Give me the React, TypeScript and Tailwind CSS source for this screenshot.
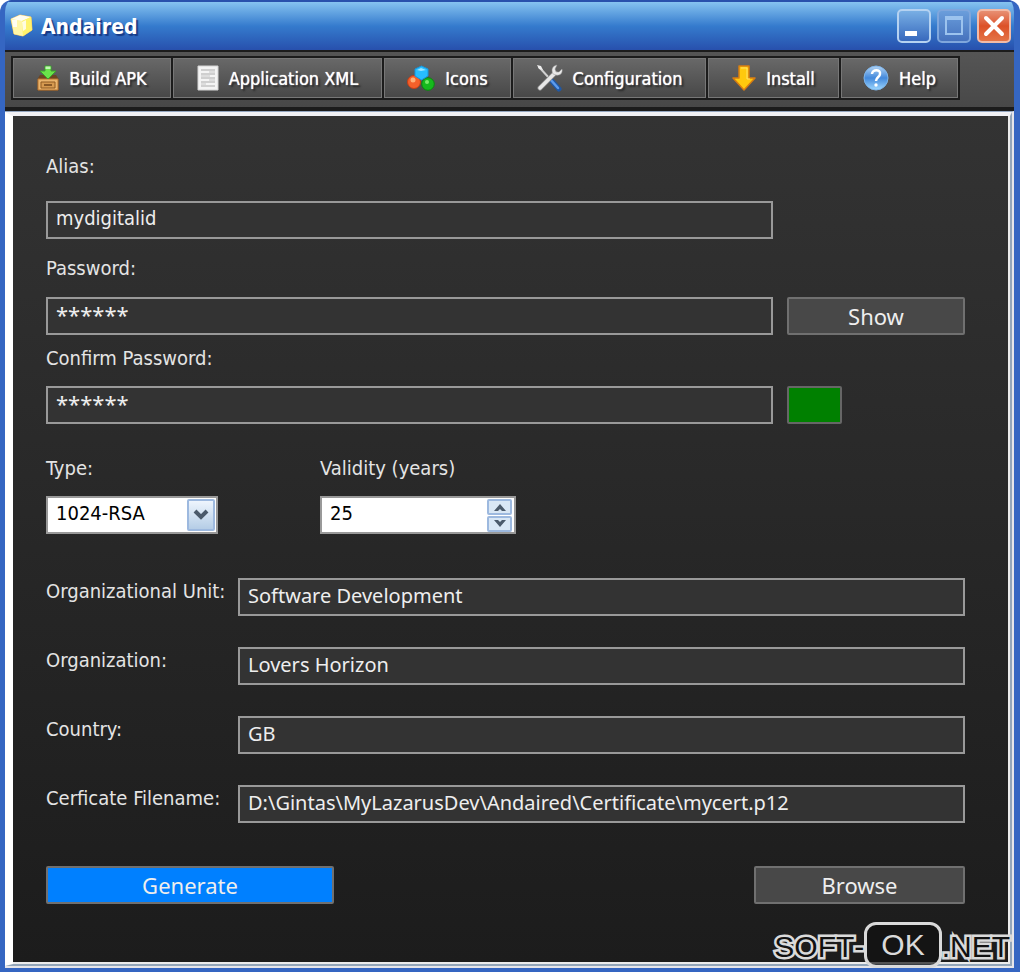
import { useState } from 'react';
import type { ReactNode } from 'react';

const AppIcon = () => (
  <svg viewBox="0 0 24 24" className="size-6" aria-hidden="true">
    <path d="M2 5 11 1 22 3 23 16 14 22 5 20Z" fill="#fff27a" stroke="#f3c564" strokeWidth="1" strokeLinejoin="round" />
    <path d="M2 5 13 7 14 22 5 20Z" fill="#fff7a8" />
    <path d="M2 5 11 1 22 3 13 7Z" fill="#fffdf0" />
    <path d="M3 6 8 6 8 13 4 13Z" fill="#fffef2" />
    <path d="M13 7 22 3 23 16 14 22Z" fill="#fff36c" />
    <path d="M13 8 17 6 17 15 14 17Z" fill="#fffce0" />
  </svg>
);

const BuildIcon = () => (
  <svg viewBox="0 0 22 26" className="h-[26px] w-[22px]" aria-hidden="true">
    <path d="M3 10H19L21.500 14V25.500H.5V14Z" fill="#6b4522" />
    <path d="M1 14H21V25H1Z" fill="#eab46c" stroke="#b87632" />
    <path d="M4 17H18V23H4Z" fill="#d69a50" stroke="#8f5a22" />
    <path d="M7 20H15" stroke="#6f431a" strokeWidth="1.500" />
    <path d="M8 1H14V6H19L11 14 3 6H8Z" fill="#6ae24a" stroke="#3ba32c" />
    <path d="M8.500 1.500H13.500V4H8.500Z" fill="#c3f7b6" />
  </svg>
);

const DocumentIcon = () => (
  <svg viewBox="0 0 22 26" className="h-[26px] w-[22px]" aria-hidden="true">
    <path d="M1 1H21V25H1Z" fill="#f4f4f4" stroke="#d4d4d4" />
    <path d="M4 5H18M4 9H18M4 13H18M4 17H18M4 21H18" stroke="#a9a9a9" strokeWidth="1.200" />
    <path d="M12 7H18M4 11H13M12 15H18M4 19H9" stroke="#c6c6c6" />
  </svg>
);

const BallsIcon = () => (
  <svg viewBox="0 0 28 26" className="h-[26px] w-7" aria-hidden="true">
    <circle cx="7" cy="17" r="6.500" fill="#f4602a" stroke="#c63d15" />
    <circle cx="21" cy="19" r="6.300" fill="#16b91d" stroke="#0b860f" />
    <path d="M8 4 14.500 1 21 4V11L14.500 15 8 11Z" fill="#27bdff" stroke="#1795dc" strokeLinejoin="round" />
    <circle cx="6" cy="15" r="2.500" fill="#ffaf78" />
    <circle cx="20" cy="17" r="2" fill="#79ea68" />
    <path d="M10 5 14 3 19 5 14 6Z" fill="#9be6ff" />
  </svg>
);

const ToolsIcon = () => (
  <svg viewBox="0 0 26 28" className="h-7 w-[26px]" aria-hidden="true">
    <path d="M2 3 13 15" stroke="#cfcfcf" strokeWidth="2" strokeLinecap="round" />
    <path d="M0 1 4 2 6 6 2 5Z" fill="#eee" />
    <path d="M13 15 22 25" stroke="#1f58a5" strokeWidth="5" strokeLinecap="round" />
    <path d="M13 15 21 24" stroke="#5d9bec" strokeWidth="2.500" strokeLinecap="round" />
    <path d="M3 24 18 9" stroke="#8c8c8c" strokeWidth="5" strokeLinecap="round" />
    <path d="M3 24 18 9" stroke="#e8e8e8" strokeWidth="3.500" strokeLinecap="round" />
    <path d="M20 1 18 5 19 8 22 8 25 5C26 9 23 12 19 11L16 10C14 6 15 2 20 1Z" fill="#e9e9e9" stroke="#999" strokeWidth=".500" />
  </svg>
);

const InstallIcon = () => (
  <svg viewBox="0 0 24 26" className="h-[26px] w-6" aria-hidden="true">
    <path d="M7 1H17V13H23L12 25 1 13H7Z" fill="#ffc90e" stroke="#d87d12" strokeWidth="1.500" strokeLinejoin="round" />
    <path d="M9 3H15V14H18" fill="none" stroke="#ffe26a" />
  </svg>
);

const HelpIcon = () => (
  <svg viewBox="0 0 26 26" className="size-[26px]" aria-hidden="true">
    <defs>
      <linearGradient id="globe" x1="0" y1="0" x2="0" y2="1">
        <stop offset="0" stopColor="#b4d5f4" />
        <stop offset=".500" stopColor="#4389dc" />
        <stop offset="1" stopColor="#9ed8ff" />
      </linearGradient>
    </defs>
    <circle cx="13" cy="13" r="12" fill="url(#globe)" stroke="#7eb5ea" />
    <path d="M9 9C9 4 18 4 17 9C17 12 13 12 13 16" fill="none" stroke="#fff" strokeWidth="2.500" />
    <circle cx="13" cy="20" r="1.700" fill="#fff" />
  </svg>
);

type ToolButtonProps = { icon: ReactNode; label: string; className: string };

const ToolButton = ({ icon, label, className }: ToolButtonProps) => (
  <button
    type="button"
    className={`flex h-10 items-center justify-center gap-[10px] border border-[#777] bg-linear-to-b from-[#686868] to-[#484848] text-[18px] text-white outline-2 outline-[#1c1c1c] [text-shadow:0_0_1px_#fff,2px_2px_2px_#222] ${className}`}
  >
    {icon}
    {label}
  </button>
);

const captionButton = 'flex size-[34px] items-center justify-center rounded-[5px] border-2';
const fieldBox = 'h-[38px] border-2 border-[#999] bg-[#333] px-2 text-[#eee] outline-none';
const pushButton = "h-[38px] rounded-xs border-2 border-[#707070] font-['Noto_Sans',sans-serif] text-[22px] leading-6 text-[#eee]";

type DetailRowProps = { id: string; label: string; value: string };

const DetailRow = ({ id, label, value }: DetailRowProps) => (
  <div className="flex">
    <label htmlFor={id} className="w-48 shrink-0 leading-[26px] whitespace-nowrap">
      {label}
    </label>
    <input
      id={id}
      defaultValue={value}
      className={`min-w-0 flex-1 pb-1 font-['Noto_Sans',sans-serif] text-[20px] ${fieldBox}`}
    />
  </div>
);

export default function App() {
  const [visible, setVisible] = useState(false);
  const [years, setYears] = useState(25);
  const password = 'secret';
  const shown = visible ? password : '*'.repeat(password.length);

  return (
    <div className="relative flex min-h-screen flex-col overflow-hidden rounded-t-xl border-r-[6px] border-b-4 border-l-[5px] border-[#3566c2] bg-[#3566c2] font-['DejaVu_Sans_Condensed','DejaVu_Sans',sans-serif]">
      <header className="flex h-[50px] items-center gap-2 border-t-2 border-[#2951ac] bg-linear-to-b from-[#86c3f0] via-[#357bcd] to-[#2850ad] pr-[3px] pl-1">
        <AppIcon />
        <h1 className="flex-1 pt-1 text-[21px] font-bold text-white [text-shadow:2px_2px_1px_#173a86]">
          Andaired
        </h1>
        <div className="flex gap-[6px]">
          <button type="button" aria-label="Minimize" className={`${captionButton} border-[#b5d2f1] bg-linear-to-b from-[#79afe4] to-[#3869bd]`}>
            <svg viewBox="0 0 24 24" className="size-6"><path d="M3 17H15V22H3Z" fill="#fff" /></svg>
          </button>
          <button type="button" aria-label="Maximize" className={`${captionButton} border-[#7fa6dc] bg-linear-to-b from-[#6b9edb] to-[#4672bd]`}>
            <svg viewBox="0 0 24 24" className="size-6">
              <path d="M4 4H20V20H4Z" fill="none" stroke="#9cc3ee" strokeWidth="2" />
              <path d="M3 4H21" stroke="#9cc3ee" strokeWidth="4" />
            </svg>
          </button>
          <button type="button" aria-label="Close" className={`${captionButton} border-[#f3bba7] bg-linear-to-b from-[#e78f72] via-[#dc5127] to-[#e47346]`}>
            <svg viewBox="0 0 24 24" className="size-6"><path d="M4 4 20 20M20 4 4 20" stroke="#fff" strokeWidth="4" strokeLinecap="round" /></svg>
          </button>
        </div>
      </header>

      <nav className="flex h-[61px] gap-[2px] border-t-2 border-b-4 border-[#1c1c1c] bg-linear-to-b from-[#555] to-[#484848] px-2 pt-[6px]">
        <ToolButton icon={<BuildIcon />} label="Build APK" className="w-[158px]" />
        <ToolButton icon={<DocumentIcon />} label="Application XML" className="w-[209px]" />
        <ToolButton icon={<BallsIcon />} label="Icons" className="w-[127px]" />
        <ToolButton icon={<ToolsIcon />} label="Configuration" className="w-[193px]" />
        <ToolButton icon={<InstallIcon />} label="Install" className="w-[131px]" />
        <ToolButton icon={<HelpIcon />} label="Help" className="w-[117px]" />
      </nav>

      <main className="flex flex-1 flex-col border-t border-r-2 border-b-2 border-[#93a6c0] border-r-[#e6e6ea] border-b-[#e6e6ea] bg-white">
        <div className="flex flex-1 flex-col border-t-4 border-r-2 border-b-2 border-l-8 border-t-[#f1f1f5] border-r-[#93a6ba] border-b-[#93a6ba] border-l-white">
          <form
            className="flex-1 border-r-2 border-b-2 border-[#ececec] bg-linear-to-b from-[#333] to-[#1c1c1c] pt-[38px] pr-[43px] pb-10 pl-[33px] text-[20px] leading-6 text-[#e4e4e4]"
            onSubmit={(e) => e.preventDefault()}
          >
            <label htmlFor="alias" className="block">Alias:</label>
            <div className="mt-[23px] pr-48">
              <input id="alias" defaultValue="mydigitalid" className={`w-full pb-1 text-[20px] ${fieldBox}`} />
            </div>

            <label htmlFor="password" className="mt-[17px] block">Password:</label>
            <div className="mt-[17px] flex gap-[14px]">
              <input
                id="password"
                value={shown}
                readOnly
                className={`min-w-0 flex-1 pb-1 font-['Noto_Sans',sans-serif] text-[22px] ${fieldBox}`}
              />
              <button type="button" className={`w-[178px] bg-[#484848] ${pushButton}`} onClick={() => setVisible(!visible)}>
                Show
              </button>
            </div>

            <label htmlFor="confirm" className="mt-[11px] block">Confirm Password:</label>
            <div className="mt-4 flex gap-[14px]">
              <input
                id="confirm"
                value={shown}
                readOnly
                className={`min-w-0 flex-1 pb-1 font-['Noto_Sans',sans-serif] text-[22px] ${fieldBox}`}
              />
              <div className="w-[178px]">
                <div className="h-[38px] w-[55px] rounded-xs border-2 border-[#666] bg-[#008000]" />
              </div>
            </div>

            <div className="mt-8 flex">
              <div className="w-[274px]">
                <label htmlFor="type" className="block">Type:</label>
                <div className="relative mt-4 w-[172px]">
                  <select id="type" className="h-[38px] w-full appearance-none border-2 border-[#999] bg-white pb-1 pl-2 text-[20px] text-black">
                    <option>1024-RSA</option>
                    <option>2048-RSA</option>
                  </select>
                  <span className="pointer-events-none absolute inset-y-[3px] right-[3px] flex w-7 items-center justify-center rounded-xs border-2 border-[#9db9df] bg-linear-to-b from-[#eef5fd] to-[#b5cde6]">
                    <svg viewBox="0 0 16 12" className="h-3 w-4"><path d="M2 2 8 8 14 2" fill="none" stroke="#4b5a6b" strokeWidth="4" /></svg>
                  </span>
                </div>
              </div>
              <div>
                <label htmlFor="validity" className="block">Validity (years)</label>
                <div className="mt-4 flex h-[38px] w-[196px] border-2 border-[#999] bg-white">
                  <input
                    id="validity"
                    value={years}
                    onChange={(e) => setYears(Number(e.target.value) || 0)}
                    className="min-w-0 flex-1 pb-1 pl-2 text-[20px] text-black outline-none"
                  />
                  <div className="flex w-[27px] flex-col justify-center gap-px">
                    <button type="button" aria-label="More years" onClick={() => setYears(years + 1)} className="flex h-4 w-[25px] items-center justify-center rounded-xs border-2 border-[#9db9df] bg-[#d9e7f5]">
                      <svg viewBox="0 0 14 8" className="h-2 w-[14px]"><path d="M1 8 7 1 13 8H9L7 6 5 8Z" fill="#4b5a6b" /></svg>
                    </button>
                    <button type="button" aria-label="Fewer years" onClick={() => setYears(years - 1)} className="flex h-4 w-[25px] items-center justify-center rounded-xs border-2 border-[#9db9df] bg-[#d9e7f5]">
                      <svg viewBox="0 0 14 8" className="h-2 w-[14px]"><path d="M1 0 7 7 13 0H9L7 2 5 0Z" fill="#4b5a6b" /></svg>
                    </button>
                  </div>
                </div>
              </div>
            </div>

            <div className="mt-11 flex flex-col gap-[31px]">
              <DetailRow id="unit" label="Organizational Unit:" value="Software Development" />
              <DetailRow id="organization" label="Organization:" value="Lovers Horizon" />
              <DetailRow id="country" label="Country:" value="GB" />
              <DetailRow id="filename" label="Cerficate Filename:" value="D:\Gintas\MyLazarusDev\Andaired\Certificate\mycert.p12" />
            </div>

            <div className="mt-[43px] flex justify-between">
              <button type="submit" className={`w-72 bg-[#0080ff] ${pushButton}`}>Generate</button>
              <button type="button" className={`w-[211px] bg-[#484848] ${pushButton}`}>Browse</button>
            </div>
          </form>
        </div>
      </main>

      <div className="absolute right-1 bottom-0 flex items-center font-['Liberation_Sans',Arial,sans-serif] text-[30px] leading-[40px] text-[#111] [font-kerning:none]">
        <span className="pt-1 [-webkit-text-stroke:5px_#dadada] [paint-order:stroke]">SOFT-</span>
        <span className="rounded-xl border-[3px] border-[#dadada] bg-[#111]/70 px-[14px] text-[#dadada]">OK</span>
        <span className="pt-1 [-webkit-text-stroke:5px_#dadada] [paint-order:stroke]">.NET</span>
      </div>
    </div>
  );
}
